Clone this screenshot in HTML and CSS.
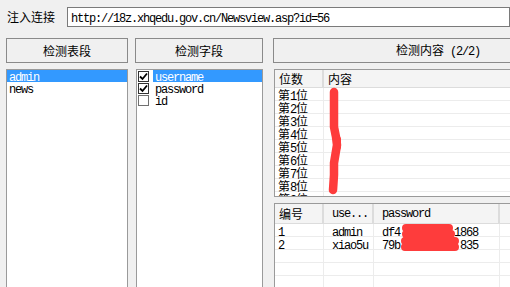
FILE: index.html
```html
<!DOCTYPE html>
<html>
<head>
<meta charset="utf-8">
<link rel="stylesheet" href="styles.css">
</head>
<body>
<div class="win">
  <div class="top">
    <span class="label">注入连接</span>
    <div class="url"><span class="m">http://18z.xhqedu.gov.cn/Newsview.asp?id=56</span></div>
  </div>
  <div class="main">
    <div class="col c1">
      <div class="btn">检测表段</div>
      <div class="listbox">
        <div class="item sel"><span class="m">admin</span></div>
        <div class="item"><span class="m">news</span></div>
      </div>
    </div>
    <div class="col c2">
      <div class="btn">检测字段</div>
      <div class="listbox lb2">
        <div class="citem"><span class="cb on"><svg viewBox="0 0 9 9" width="9" height="9"><path d="M1 4.5 L3.5 7 L8 1.5" fill="none" stroke="#000" stroke-width="1.8"/></svg></span><span class="ctext sel"><span class="m">username</span></span></div>
        <div class="citem"><span class="cb on"><svg viewBox="0 0 9 9" width="9" height="9"><path d="M1 4.5 L3.5 7 L8 1.5" fill="none" stroke="#000" stroke-width="1.8"/></svg></span><span class="ctext"><span class="m">password</span></span></div>
        <div class="citem"><span class="cb off"></span><span class="ctext"><span class="m">id</span></span></div>
      </div>
    </div>
    <div class="col c3">
      <div class="btn"><span>检测内容<span class="m">&nbsp;(2/2)</span></span></div>
      <div class="lv lv1">
        <div class="lvh">
          <div class="hc w1">位数</div>
          <div class="hc wrest">内容</div>
        </div>
        <div class="row"><div class="cell w1">第<span class="m">1</span>位</div><div class="cell wrest"></div></div>
        <div class="row"><div class="cell w1">第<span class="m">2</span>位</div><div class="cell wrest"></div></div>
        <div class="row"><div class="cell w1">第<span class="m">3</span>位</div><div class="cell wrest"></div></div>
        <div class="row"><div class="cell w1">第<span class="m">4</span>位</div><div class="cell wrest"></div></div>
        <div class="row"><div class="cell w1">第<span class="m">5</span>位</div><div class="cell wrest"></div></div>
        <div class="row"><div class="cell w1">第<span class="m">6</span>位</div><div class="cell wrest"></div></div>
        <div class="row"><div class="cell w1">第<span class="m">7</span>位</div><div class="cell wrest"></div></div>
        <div class="row"><div class="cell w1">第<span class="m">8</span>位</div><div class="cell wrest"></div></div>
        <div class="row"><div class="cell w1">第<span class="m">9</span>位</div><div class="cell wrest"></div></div>
        <svg class="redact r1" width="24" height="110" viewBox="0 0 24 110"><path d="M9 5 L9 40 L11 50 L12 58 L11 64 L9 76 L9 88 L8 103" fill="none" stroke="#fe3c3c" stroke-width="8.5" stroke-linecap="round" stroke-linejoin="round"/><path d="M10 48 L13 52 L13 60 L11 64" fill="none" stroke="#fe3c3c" stroke-width="6" stroke-linecap="round" stroke-linejoin="round"/></svg>
      </div>
      <div class="lv lv2">
        <div class="lvh h2">
          <div class="hc w1">编号</div>
          <div class="hc w2"><span class="m">use...</span></div>
          <div class="hc w3"><span class="m">password</span></div>
          <div class="hc wrest"></div>
        </div>
        <div class="row"><div class="cell w1"><span class="m">1</span></div><div class="cell w2"><span class="m">admin</span></div><div class="cell w3"><span class="m">df4&nbsp;&nbsp;&nbsp;&nbsp;&nbsp;&nbsp;&nbsp;&nbsp;&nbsp;1868</span></div><div class="cell wrest"></div></div>
        <div class="row"><div class="cell w1"><span class="m">2</span></div><div class="cell w2"><span class="m">xiao5u</span></div><div class="cell w3"><span class="m">79b&nbsp;&nbsp;&nbsp;&nbsp;&nbsp;&nbsp;&nbsp;&nbsp;&nbsp;&nbsp;835</span></div><div class="cell wrest"></div></div>
        <div class="row"><div class="cell w1"></div><div class="cell w2"></div><div class="cell w3"></div><div class="cell wrest"></div></div>
        <div class="row"><div class="cell w1"></div><div class="cell w2"></div><div class="cell w3"></div><div class="cell wrest"></div></div>
        <div class="row"><div class="cell w1"></div><div class="cell w2"></div><div class="cell w3"></div><div class="cell wrest"></div></div>
        <svg class="redact r2" width="76" height="32" viewBox="0 0 76 32"><path d="M16 6 L59 6 M16 12 L61 12 M15 19 L65 19 M15 25 L65 25" fill="none" stroke="#fe3c3c" stroke-width="8" stroke-linecap="round"/></svg>
      </div>
    </div>
  </div>
</div>
</body>
</html>
```

FILE: styles.css
```css
html, body {
  margin: 0;
  padding: 0;
}
body {
  width: 510px;
  height: 287px;
  overflow: hidden;
  background: #f0f0f0;
  font-family: "Noto Sans CJK SC", sans-serif;
  font-size: 12px;
  color: #000;
}
.win {
  width: 510px;
  height: 287px;
  overflow: hidden;
}
.m {
  font-family: "Liberation Mono", monospace;
  font-size: 12px;
  letter-spacing: -1.2px;
}
.top {
  display: flex;
  align-items: center;
  padding: 7px 0 0 7px;
  height: 20px;
}
.label {
  width: 60px;
  line-height: 20px;
}
.url {
  flex: 1;
  height: 18px;
  border: 1px solid #7a7a7a;
  background: #fff;
  line-height: 18px;
  padding-left: 3px;
  white-space: nowrap;
}
.main {
  display: flex;
  padding-left: 6px;
  margin-top: 11px;
}
.col {
  display: flex;
  flex-direction: column;
  flex-shrink: 0;
}
.c1 { width: 122px; }
.c2 { width: 128px; margin-left: 7px; }
.c3 { width: 330px; margin-left: 10px; }
.btn {
  height: 23px;
  border: 1px solid #8a8a8a;
  display: flex;
  align-items: center;
  justify-content: center;
  line-height: 14px;
  white-space: nowrap;
}
.listbox {
  margin-top: 6px;
  height: 230px;
  border: 1px solid #9a9a9a;
  background: #fff;
}
.lb2 { margin-left: 1px; }
.item {
  height: 12px;
  line-height: 12px;
  padding-left: 2px;
  white-space: nowrap;
}
.sel {
  background: #3399ff;
  color: #fff;
}
.citem {
  display: flex;
  align-items: center;
  height: 12px;
}
.cb {
  width: 9px;
  height: 9px;
  border: 1px solid #333;
  background: #fff;
  margin-left: 1px;
  margin-right: 4px;
  display: flex;
  align-items: center;
  justify-content: center;
  flex-shrink: 0;
}
.cb.off { border-color: #707070; }
.ctext {
  flex: 1;
  height: 12px;
  line-height: 12px;
  padding-left: 2px;
  white-space: nowrap;
}
.lv {
  position: relative;
  margin-top: 6px;
  margin-left: 1px;
  border: 1px solid #9a9a9a;
  background: #fff;
  overflow: hidden;
}
.lv1 { height: 126px; }
.lv2 { height: 100px; }
.lvh {
  display: flex;
  height: 17px;
  background: #f4f4f4;
  border-bottom: 1px solid #dcdcdc;
}
.lvh.h2 { height: 19px; }
.hc {
  display: flex;
  align-items: center;
  padding-left: 4px;
  border-right: 2px solid #dcdcdc;
  box-sizing: border-box;
  white-space: nowrap;
  line-height: 14px;
  flex-shrink: 0;
}
.hc.w2, .hc.w3 { padding-left: 8px; }
.w1 { width: 49px; }
.w2 { width: 50px; }
.w3 { width: 126px; }
.wrest { flex: 1; border-right: none; }
.row {
  display: flex;
  height: 13px;
  background-image: linear-gradient(to top, #ececec 1px, transparent 1px);
}
.cell {
  flex-shrink: 0;
  box-sizing: border-box;
  border-right: 1px solid #ececec;
  padding-left: 8px;
  line-height: 13px;
  white-space: nowrap;
}
.row .w1 { padding-left: 3px; }
.cell.wrest { flex: 1; border-right: none; }
.redact {
  position: absolute;
}
.r1 { left: 50px; top: 17px; }
.r2 { left: 115px; top: 18px; }
```
